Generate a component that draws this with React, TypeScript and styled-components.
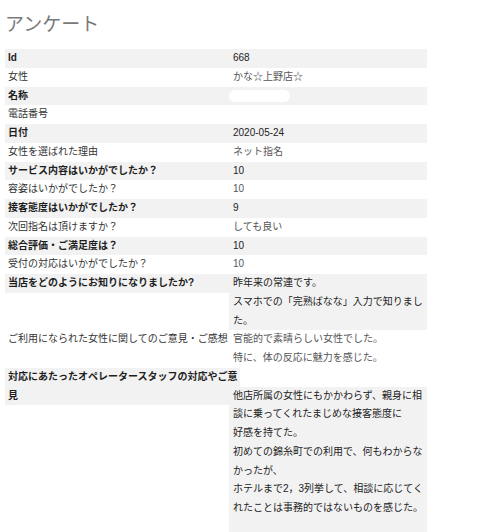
import React from "react";
import styled, { createGlobalStyle } from "styled-components";

const GlobalStyle = createGlobalStyle`
  html, body {
    margin: 0;
    padding: 0;
    background: #ffffff;
  }
  body {
    font-family: "Liberation Sans", "Noto Sans CJK JP", sans-serif;
  }
`;

const Page = styled.div`
  padding: 0 5px;
  width: 422px;
`;

const Title = styled.h1`
  margin: 13px 0 12px;
  font-size: 19px;
  line-height: 24px;
  font-weight: 400;
  color: #7a7a7a;
  letter-spacing: 0;
`;

const Table = styled.div`
  display: flex;
  flex-direction: column;
  font-size: 10px;
  line-height: 18.75px;
`;

const Row = styled.div<{ $split?: boolean }>`
  display: grid;
  grid-template-columns: 224px 198px;
  align-items: start;
  ${(p) => (p.$split ? "grid-template-rows: 18.75px auto;" : "")}
`;

const Label = styled.div<{ $odd: boolean; $split?: boolean }>`
  padding-left: 3px;
  background: ${(p) => (p.$odd ? "#f2f2f2" : "#ffffff")};
  font-weight: ${(p) => (p.$odd ? 700 : 400)};
  color: ${(p) => (p.$odd ? "#1e1e1e" : "#333333")};
  ${(p) =>
    p.$split
      ? "grid-row: 1 / span 2; grid-column: 1; width: 235px; box-sizing: border-box;"
      : ""}
`;

const Value = styled.div<{ $odd: boolean; $split?: boolean; $tail?: boolean }>`
  padding: 0 0 ${(p) => (p.$tail ? "20px" : "0")} 4px;
  background: ${(p) => (p.$odd ? "#f2f2f2" : "#ffffff")};
  color: ${(p) => (p.$odd ? "#222222" : "#555555")};
  min-height: 18.75px;
  ${(p) => (p.$split ? "grid-row: 2; grid-column: 2;" : "")}
`;

const Redacted = styled.span`
  display: inline-block;
  width: 61px;
  height: 12px;
  margin-left: -4px;
  border-radius: 6px;
  background: #ffffff;
  vertical-align: middle;
`;

type Item = {
  label: string;
  value: React.ReactNode;
  split?: boolean;
  tail?: boolean;
};

const items: Item[] = [
  { label: "Id", value: "668" },
  { label: "女性", value: "かな☆上野店☆" },
  { label: "名称", value: <Redacted /> },
  { label: "電話番号", value: "" },
  { label: "日付", value: "2020-05-24" },
  { label: "女性を選ばれた理由", value: "ネット指名" },
  { label: "サービス内容はいかがでしたか？", value: "10" },
  { label: "容姿はいかがでしたか？", value: "10" },
  { label: "接客態度はいかがでしたか？", value: "9" },
  { label: "次回指名は頂けますか？", value: "しても良い" },
  { label: "総合評価・ご満足度は？", value: "10" },
  { label: "受付の対応はいかがでしたか？", value: "10" },
  {
    label: "当店をどのようにお知りになりましたか?",
    value: (
      <>
        昨年来の常連です。
        <br />
        スマホでの「完熟ばなな」入力で知りました。
      </>
    ),
  },
  {
    label: "ご利用になられた女性に関してのご意見・ご感想",
    value: (
      <>
        官能的で素晴らしい女性でした。
        <br />
        特に、体の反応に魅力を感じた。
      </>
    ),
  },
  {
    label: "対応にあたったオペレータースタッフの対応やご意見",
    split: true,
    tail: true,
    value: (
      <>
        他店所属の女性にもかかわらず、親身に相談に乗ってくれたまじめな接客態度に
        <br />
        好感を持てた。
        <br />
        初めての錦糸町での利用で、何もわからなかったが、
        <br />
        ホテルまで2，3列挙して、相談に応じてくれたことは事務的ではないものを感じた。
      </>
    ),
  },
];

export default function App() {
  return (
    <>
      <GlobalStyle />
      <Page>
        <Title>アンケート</Title>
        <Table>
          {items.map((it, i) => {
            const odd = i % 2 === 0;
            return (
              <Row key={it.label} $split={it.split}>
                <Label $odd={odd} $split={it.split}>
                  {it.label}
                </Label>
                <Value $odd={odd} $split={it.split} $tail={it.tail}>
                  {it.value}
                </Value>
              </Row>
            );
          })}
        </Table>
      </Page>
    </>
  );
}
